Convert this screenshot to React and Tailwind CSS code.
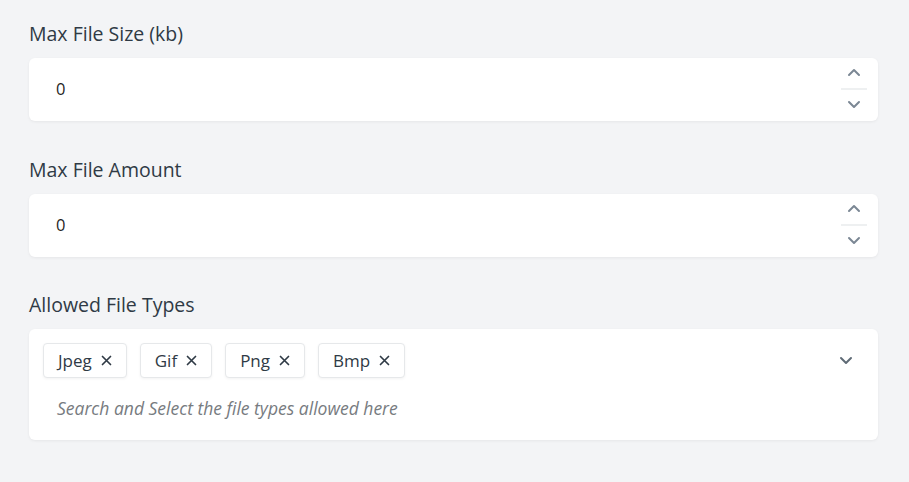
import React, { useState } from 'react';

const fontStack = { fontFamily: '"Open Sans", "Noto Sans", sans-serif' };

const ChevronUp = () => (
    <svg width="14" height="9" viewBox="0 0 14 9" fill="none" stroke="#7b8794" strokeWidth="2" strokeLinecap="round" strokeLinejoin="round">
        <path d="M2 7 L7 2 L12 7" />
    </svg>
);

const ChevronDown = ({ color = '#7b8794' }) => (
    <svg width="14" height="9" viewBox="0 0 14 9" fill="none" stroke={color} strokeWidth="2" strokeLinecap="round" strokeLinejoin="round">
        <path d="M2 2 L7 7 L12 2" />
    </svg>
);

const FieldLabel = ({ children }) => (
    <label className="block text-[19.5px] leading-6 text-[#2f3a45] mb-3">{children}</label>
);

const NumberField = ({ label, value }) => (
    <div>
        <FieldLabel>{label}</FieldLabel>
        <div className="flex items-center h-[63px] bg-white rounded-md shadow-[0_1px_3px_rgba(0,0,0,0.06)]">
            <div className="flex-1 pl-[27px] text-[16.5px] text-[#1f1f1f]">{value}</div>
            <div className="self-start flex flex-col items-center w-[26px] mr-[11px]">
                <div className="h-[28px] flex items-center justify-center"><ChevronUp /></div>
                <div className="w-full h-[2px] bg-[#eef0f1] mt-[2px]" />
                <div className="h-[28px] flex items-center justify-center"><ChevronDown /></div>
            </div>
        </div>
    </div>
);

export default function App() {
    const [types, setTypes] = useState(['Jpeg', 'Gif', 'Png', 'Bmp']);

    return (
        <div className="min-h-[482px] w-[909px] bg-[#f3f4f6] px-[29px] pt-[22px]" style={fontStack}>
            <div className="w-[849px] flex flex-col">
                <NumberField label="Max File Size (kb)" value="0" />
                <div className="mt-[37px]">
                    <NumberField label="Max File Amount" value="0" />
                </div>
                <div className="mt-[36px]">
                    <FieldLabel>Allowed File Types</FieldLabel>
                    <div className="flex bg-white rounded-md shadow-[0_1px_3px_rgba(0,0,0,0.06)] h-[111px] pl-[14px] pt-[14px] pr-[25px]">
                        <div className="flex-1">
                            <div className="flex gap-[13px]">
                                {types.map(t => (
                                    <span key={t} className="flex items-center h-[35px] px-[14px] gap-[9px] bg-white border border-[#e6e8ea] rounded shadow-[0_1px_3px_rgba(0,0,0,0.05)] text-[17px] text-[#2f3a45]">
                                        {t}
                                        <button onClick={() => setTypes(types.filter(x => x !== t))} className="text-[#2f3a45] flex items-center">
                                            <svg width="11" height="11" viewBox="0 0 11 11" stroke="currentColor" strokeWidth="1.7" strokeLinecap="round">
                                                <path d="M1.5 1.5 L9.5 9.5 M9.5 1.5 L1.5 9.5" />
                                            </svg>
                                        </button>
                                    </span>
                                ))}
                            </div>
                            <div className="mt-[17px] pl-[14px] text-[17.5px] italic text-[#777b80]">
                                Search and Select the file types allowed here
                            </div>
                        </div>
                        <div className="pt-[13px]"><ChevronDown color="#5f6b76" /></div>
                    </div>
                </div>
            </div>
        </div>
    );
}
